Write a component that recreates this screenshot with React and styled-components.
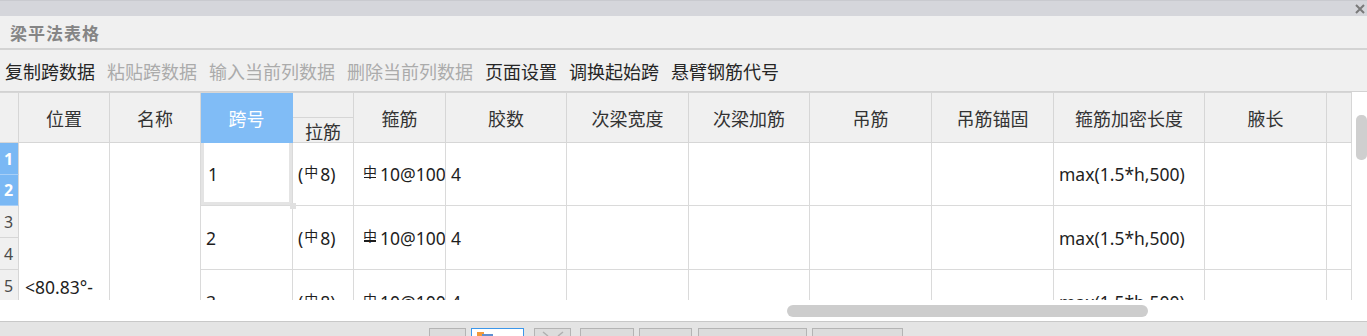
import React from "react";
import styled, { createGlobalStyle, css } from "styled-components";

const Global = createGlobalStyle`
  html, body { margin: 0; padding: 0; background: #f0f0f0; }
  body { font-family: "Noto Sans", "Noto Sans CJK SC", sans-serif; overflow: hidden; }
  * { box-sizing: border-box; }
`;

const Page = styled.div`
  width: 1367px;
  height: 336px;
  display: flex;
  flex-direction: column;
  overflow: hidden;
  background: #f0f0f0;
  & > * { flex-shrink: 0; }
`;

const TopStrip = styled.div`
  height: 16px;
  background: #d5d6db;
  border-top: 1px solid #c9cacf;
  display: flex;
  justify-content: flex-end;
  align-items: center;
  padding-right: 2px;
`;

const CloseIcon = () => (
  <svg width="10" height="10" viewBox="0 0 10 10">
    <path d="M1 1 L9 9 M9 1 L1 9" stroke="#7a7a7a" strokeWidth="2" />
  </svg>
);

const TitleBar = styled.div`
  height: 34px;
  border-bottom: 2px solid #d3d3d3;
  display: flex;
  align-items: center;
  padding: 1px 0 0 10px;
  font-size: 17px;
  font-weight: 700;
  letter-spacing: 1px;
  color: #858585;
`;

const Toolbar = styled.div`
  height: 42px;
  border-bottom: 1px solid #d2d2d2;
  display: flex;
  align-items: center;
  gap: 12px;
  padding-left: 5px;
`;

const ToolItem = styled.span`
  font-size: 18px;
  color: ${(p) => (p.$disabled ? "#ababab" : "#262626")};
  white-space: nowrap;
`;

const GridArea = styled.div`
  height: 229px;
  display: flex;
  background: #ffffff;
`;

const GridMain = styled.div`
  flex: 1;
  display: flex;
  flex-direction: column;
  min-width: 0;
`;

const Viewport = styled.div`
  height: 208px;
  flex-shrink: 0;
  overflow: hidden;
  border-top: 1px solid #d6d6d6;
`;

const Table = styled.div`
  display: grid;
  grid-template-columns: 19px 91px 91px 92px 61px 92px 121px 122px 121px 122px 122px 151px 122px 25px;
  grid-template-rows: 25px 25px 32px 31px 32px 32px 32px 32px 32px;
  width: 1352px;
`;

const cellBase = css`
  grid-column: ${(p) => p.$col} / span ${(p) => p.$cspan || 1};
  grid-row: ${(p) => p.$row} / span ${(p) => p.$rspan || 1};
  border-right: 1px solid #dadada;
  border-bottom: 1px solid #dadada;
  overflow: hidden;
  white-space: nowrap;
`;

const HeadCell = styled.div`
  ${cellBase};
  background: ${(p) => (p.$active ? "#80bcf6" : "#f0f0f0")};
  color: ${(p) => (p.$active ? "#ffffff" : "#333333")};
  border-right-color: ${(p) => (p.$active ? "#80bcf6" : "#d6d6d6")};
  border-bottom-color: ${(p) => (p.$active ? "#80bcf6" : "#d6d6d6")};
  font-size: 18px;
  display: flex;
  align-items: center;
  justify-content: center;
  padding-top: ${(p) => (p.$low ? "2px" : "0")};
`;

const RowHead = styled.div`
  ${cellBase};
  background: ${(p) => (p.$sel ? "#7ab8f4" : "#f0f0f0")};
  color: ${(p) => (p.$sel ? "#ffffff" : "#4a4a4a")};
  font-weight: ${(p) => (p.$sel ? 700 : 400)};
  border-bottom-color: ${(p) => (p.$sel ? "#a8cff7" : "#d6d6d6")};
  border-right-color: #d6d6d6;
  font-size: 16px;
  display: flex;
  align-items: center;
  padding-left: 4px;
`;

const Cell = styled.div`
  ${cellBase};
  position: relative;
  background: #ffffff;
  color: #1e1e1e;
  font-size: 17.5px;
  display: flex;
  align-items: ${(p) => (p.$top ? "flex-start" : "center")};
  padding: ${(p) => (p.$top ? "132px 6px 0" : `0 0 0 ${p.$pl || 5}px`)};
  ${(p) =>
    p.$selected &&
    css`
      overflow: visible;
      box-shadow: inset 3px 0 0 #e4e4e4, inset -3px 0 0 #e4e4e4, inset 0 -3px 0 #e4e4e4;
      padding-left: 7px;
      &::after {
        content: "";
        position: absolute;
        right: -4px;
        bottom: -4px;
        width: 6px;
        height: 6px;
        background: #e0e0e0;
        z-index: 2;
      }
    `}
`;

const Rebar = styled.span`
  position: relative;
  display: inline-block;
  font-size: 14px;
  line-height: 14px;
  top: -3px;
  margin: 0 ${(p) => (p.$hrb ? 3 : 2)}px 0 1px;
  font-family: "Noto Sans CJK SC", sans-serif;
  ${(p) =>
    p.$hrb &&
    css`
      &::after {
        content: "";
        position: absolute;
        left: 1px;
        right: 1px;
        bottom: 0px;
        height: 1.5px;
        background: currentColor;
      }
    `}
`;

const VScroll = styled.div`
  width: 15px;
  background: #ffffff;
  padding: 23px 0 0 4px;
`;

const VThumb = styled.div`
  width: 11px;
  height: 45px;
  border-radius: 5px;
  background: #cfcfcf;
`;

const HScroll = styled.div`
  height: 21px;
  flex-shrink: 0;
  background: #ffffff;
  padding-top: 5px;
`;

const HThumb = styled.div`
  height: 12px;
  border-radius: 6px;
  background: #cdcdcd;
`;

const BottomBar = styled.div`
  height: 15px;
  overflow: hidden;
  border-top: 1px solid #c8c8c8;
  background: #e4e4e4;
  display: flex;
  align-items: flex-start;
  padding: 6px 0 0 429px;
`;

const BarButton = styled.div`
  width: ${(p) => p.$w}px;
  margin-left: ${(p) => p.$ml}px;
  height: 20px;
  flex-shrink: 0;
  border: 1px solid ${(p) => (p.$active ? "#3d97ea" : "#b4b4b4")};
  background: ${(p) => (p.$active ? "#ffffff" : "#dcdcdc")};
  display: flex;
  align-items: flex-start;
  padding: 2px 0 0 5px;
`;

const FolderIcon = () => (
  <svg width="16" height="10" viewBox="0 0 16 10">
    <rect x="0" y="1" width="7" height="9" fill="#f29a3c" />
    <rect x="5" y="3" width="11" height="7" fill="#5f8fd0" />
  </svg>
);

const MergeIcon = () => (
  <svg width="26" height="8" viewBox="0 0 26 8">
    <path d="M3 1 L8 5 M23 1 L18 5" stroke="#b0b0b0" strokeWidth="1.5" fill="none" />
  </svg>
);

const tools = [
  ["复制跨数据", false],
  ["粘贴跨数据", true],
  ["输入当前列数据", true],
  ["删除当前列数据", true],
  ["页面设置", false],
  ["调换起始跨", false],
  ["悬臂钢筋代号", false],
];

const headers = [
  "位置",
  "名称",
  "跨号",
  "拉筋",
  "箍筋",
  "胶数",
  "次梁宽度",
  "次梁加筋",
  "吊筋",
  "吊筋锚固",
  "箍筋加密长度",
  "腋长",
  "",
];

const spans = [1, 2, 3];

const buttons = [
  { w: 37, ml: 0 },
  { w: 53, ml: 5, active: true, icon: "folder" },
  { w: 37, ml: 10, icon: "merge" },
  { w: 54, ml: 9 },
  { w: 53, ml: 5 },
  { w: 109, ml: 6 },
  { w: 91, ml: 5 },
];

export default function App() {
  return (
    <Page>
      <Global />
      <TopStrip>
        <CloseIcon />
      </TopStrip>
      <TitleBar>梁平法表格</TitleBar>
      <Toolbar>
        {tools.map(([t, d]) => (
          <ToolItem key={t} $disabled={d}>
            {t}
          </ToolItem>
        ))}
      </Toolbar>
      <GridArea>
        <GridMain>
          <Viewport>
            <Table>
              <HeadCell $col={1} $row={1} $rspan={2} />
              {headers.map((h, i) => {
                const col = i + 2;
                if (h === "拉筋") {
                  return (
                    <React.Fragment key={h}>
                      <HeadCell $col={col} $row={1} />
                      <HeadCell $col={col} $row={2} $low>
                        {h}
                      </HeadCell>
                    </React.Fragment>
                  );
                }
                return (
                  <HeadCell key={col} $col={col} $row={1} $rspan={2} $active={h === "跨号"}>
                    {h}
                  </HeadCell>
                );
              })}
              {[1, 2, 3, 4, 5, 6, 7].map((n) => (
                <RowHead key={n} $col={1} $row={n + 2} $sel={n <= 2}>
                  {n}
                </RowHead>
              ))}
              <Cell $col={2} $row={3} $rspan={7} $top>
                {"<80.83°-"}
              </Cell>
              <Cell $col={3} $row={3} $rspan={7} />
              {spans.map((n, i) => {
                const row = 3 + i * 2;
                return (
                  <React.Fragment key={n}>
                    <Cell $col={4} $row={row} $rspan={2} $selected={n === 1}>
                      {n}
                    </Cell>
                    <Cell $col={5} $row={row} $rspan={2}>
                      (<Rebar>中</Rebar>8)
                    </Cell>
                    <Cell $col={6} $row={row} $rspan={2} $pl={8}>
                      <Rebar $hrb>中</Rebar>10@100
                    </Cell>
                    <Cell $col={7} $row={row} $rspan={2}>
                      4
                    </Cell>
                    <Cell $col={8} $row={row} $rspan={2} />
                    <Cell $col={9} $row={row} $rspan={2} />
                    <Cell $col={10} $row={row} $rspan={2} />
                    <Cell $col={11} $row={row} $rspan={2} />
                    <Cell $col={12} $row={row} $rspan={2}>
                      max(1.5*h,500)
                    </Cell>
                    <Cell $col={13} $row={row} $rspan={2} />
                    <Cell $col={14} $row={row} $rspan={2} />
                  </React.Fragment>
                );
              })}
            </Table>
          </Viewport>
          <HScroll>
            <HThumb style={{ marginLeft: 787, width: 361 }} />
          </HScroll>
        </GridMain>
        <VScroll>
          <VThumb />
        </VScroll>
      </GridArea>
      <BottomBar>
        {buttons.map((b, i) => (
          <BarButton key={i} $w={b.w} $ml={b.ml} $active={b.active}>
            {b.icon === "folder" && <FolderIcon />}
            {b.icon === "merge" && <MergeIcon />}
          </BarButton>
        ))}
      </BottomBar>
    </Page>
  );
}
